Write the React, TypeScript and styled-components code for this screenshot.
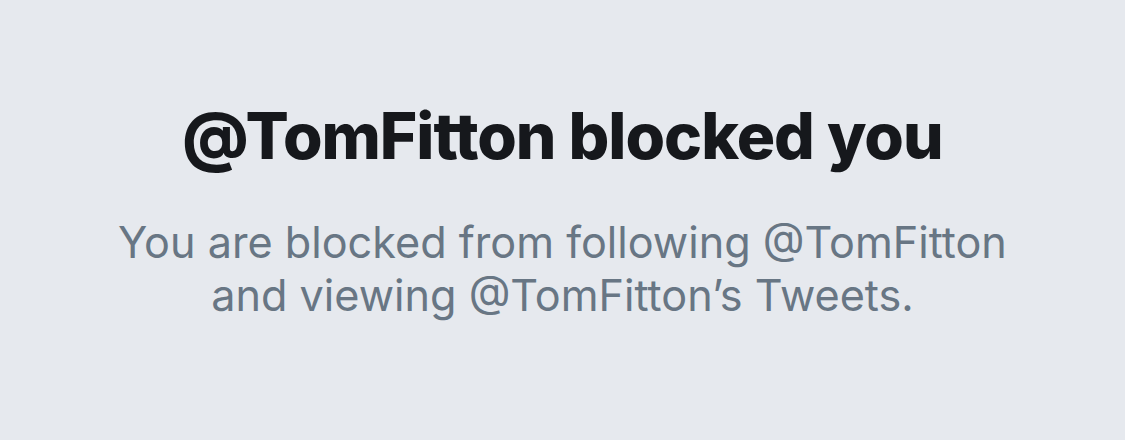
import React from 'react';
import styled, { createGlobalStyle } from 'styled-components';

const GlobalStyle = createGlobalStyle`
  html, body {
    margin: 0;
    padding: 0;
    background: #e6e9ee;
  }
  body {
    font-family: Inter, "Noto Sans", "Liberation Sans", sans-serif;
  }
`;

const Page = styled.div`
  width: 1125px;
  height: 440px;
  background: #e6e9ee;
  display: flex;
  flex-direction: column;
  align-items: center;
  padding-top: 96px;
  box-sizing: border-box;
`;

const Title = styled.h1`
  margin: 0;
  font-size: 64px;
  line-height: 80px;
  font-weight: 800;
  letter-spacing: -1px;
  color: #16181c;
`;

const Message = styled.p`
  margin: 40px 0 0;
  font-size: 43.2px;
  line-height: 53px;
  font-weight: 400;
  color: #687684;
  text-align: center;
`;

const App: React.FC = () => {
  const handle = '@TomFitton';
  return (
    <>
      <GlobalStyle />
      <Page>
        <Title>{handle} blocked you</Title>
        <Message>
          You are blocked from following {handle}
          <br />
          and viewing {handle}’s Tweets.
        </Message>
      </Page>
    </>
  );
};

export default App;
